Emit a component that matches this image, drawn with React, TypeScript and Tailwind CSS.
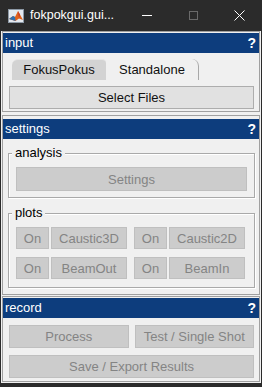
import React from 'react';

interface BtnProps {
    label: string;
    disabled?: boolean;
    className?: string;
}

const Btn: React.FC<BtnProps> = ({ label, disabled, className = '' }) => (
    <button
        className={`flex items-center justify-center border text-[13px] leading-none ${
            disabled
                ? 'bg-[#cccccc] border-[#bfbfbf] text-[#848484]'
                : 'bg-[#e1e1e1] border-[#adadad] text-[#111111]'
        } ${className}`}
    >
        {label}
    </button>
);

const PanelHeader: React.FC<{ title: string }> = ({ title }) => (
    <div className="h-[20px] bg-[#0d3d7d] text-white flex items-center justify-between pl-[2px] pr-[3px] text-[13px] leading-[20px]">
        <span>{title}</span>
        <span className="font-bold text-[14px]">?</span>
    </div>
);

const GroupBox: React.FC<{ title: string; className?: string; children: React.ReactNode }> = ({ title, className = '', children }) => (
    <div className={`relative border border-[#a9a9a9] shadow-[inset_1px_1px_0_#ffffff,1px_1px_0_#ffffff] ${className}`}>
        <span className="absolute left-[3px] top-[-9px] bg-[#f0f0f0] px-[3px] text-[13px] leading-[16px] text-black">{title}</span>
        {children}
    </div>
);

const PlotToggle: React.FC<{ name: string }> = ({ name }) => (
    <div className="flex gap-[2px]">
        <Btn label="On" disabled className="w-[33px] h-[22px]" />
        <Btn label={name} disabled className="w-[76px] h-[22px]" />
    </div>
);

const TitleBar: React.FC = () => (
    <div className="h-[31px] flex items-center text-white shrink-0">
        <svg width="16" height="16" viewBox="0 0 16 16" className="ml-[8px] shrink-0">
            <rect x="0.5" y="1.5" width="15" height="13" fill="#e4e9ef" stroke="#8d99a6" />
            <path d="M1 11 L5 8 L7 9 L10 3 L12 6.5 L15 12 L11 10.5 L7.5 13 Z" fill="#e2621b" />
            <path d="M10 3 L12 6.5 L11 10.5 Z" fill="#c0392b" />
            <path d="M1 11 L5 8 L7 9 L7.5 13 Z" fill="#2e6fb0" />
        </svg>
        <span className="ml-[6px] text-[12.5px] whitespace-nowrap">fokpokgui.gui...</span>
        <div className="flex-1" />
        <div className="flex h-full">
            <div className="w-[46px] h-full flex items-center justify-center">
                <div className="w-[10px] h-[1px] bg-white" />
            </div>
            <div className="w-[46px] h-full flex items-center justify-center">
                <div className="w-[9px] h-[9px] border border-[#6a6a6a]" />
            </div>
            <div className="w-[46px] h-full flex items-center justify-center">
                <svg width="11" height="11" viewBox="0 0 11 11">
                    <path d="M0.5 0.5 L10.5 10.5 M10.5 0.5 L0.5 10.5" stroke="#ffffff" strokeWidth="1" />
                </svg>
            </div>
        </div>
    </div>
);

export default function App() {
    return (
        <div className="w-[262px] h-[387px] bg-[#2b2b2b] flex flex-col font-['Liberation_Sans',Arial,sans-serif]">
            <TitleBar />
            <div className="mx-[1px] h-[352px] bg-[#f0f0f0] px-[1px] flex flex-col">
                {/* input */}
                <div className="border border-[#a0a0a0] pt-[1px] pb-[2px]">
                    <PanelHeader title="input" />
                    <div className="mt-[6px] h-[21px] flex pl-[9px] text-[13px] leading-[16px]">
                        <div className="w-[94px] h-full bg-[#d3d3d3] rounded-tl-[6px] rounded-tr-[4px] border-t border-[#e6e6e6] flex justify-center pt-[2px] text-[#111111]">
                            FokusPokus
                        </div>
                        <div className="w-[93px] h-full border-r border-[#a8a8a8] rounded-tr-[7px] flex justify-center pt-[3px] text-[#111111]">
                            Standalone
                        </div>
                    </div>
                    <div className="mt-[6px] pl-[6px] pr-[5px]">
                        <Btn label="Select Files" className="w-full h-[23px]" />
                    </div>
                </div>

                {/* settings */}
                <div className="mt-[3px] border border-[#a0a0a0] pt-[3px] pb-[6px]">
                    <PanelHeader title="settings" />
                    <GroupBox title="analysis" className="mt-[14px] ml-[5px] mr-[4px] pt-[13px] pb-[6px] px-[7px]">
                        <Btn label="Settings" disabled className="w-full h-[24px]" />
                    </GroupBox>
                    <GroupBox title="plots" className="mt-[15px] ml-[5px] mr-[4px] pt-[13px] pb-[8px] px-[7px]">
                        <div className="flex flex-col gap-[8px]">
                            <div className="flex gap-[7px]">
                                <PlotToggle name="Caustic3D" />
                                <PlotToggle name="Caustic2D" />
                            </div>
                            <div className="flex gap-[7px]">
                                <PlotToggle name="BeamOut" />
                                <PlotToggle name="BeamIn" />
                            </div>
                        </div>
                    </GroupBox>
                </div>

                {/* record */}
                <div className="mt-[1px] border border-[#a0a0a0] pt-[1px] pb-[3px]">
                    <PanelHeader title="record" />
                    <div className="mt-[7px] pl-[6px] pr-[5px] flex flex-col gap-[7px]">
                        <div className="grid grid-cols-2 gap-[6px]">
                            <Btn label="Process" disabled className="h-[23px]" />
                            <Btn label="Test / Single Shot" disabled className="h-[23px]" />
                        </div>
                        <Btn label="Save / Export Results" disabled className="w-full h-[23px]" />
                    </div>
                </div>
            </div>
        </div>
    );
}
